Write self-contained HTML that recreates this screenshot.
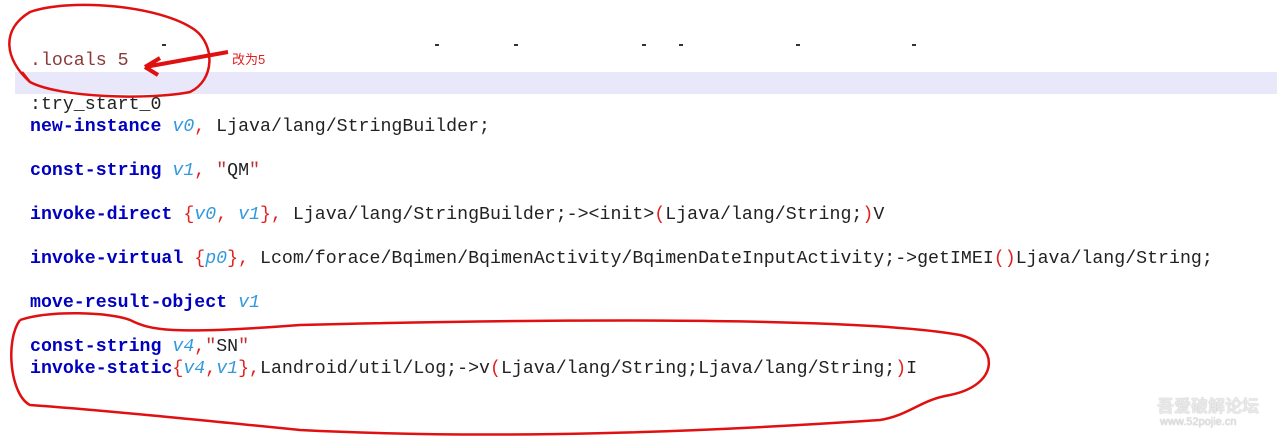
<!DOCTYPE html>
<html><head><meta charset="utf-8"><style>
body{margin:0;width:1277px;height:440px;background:#fff;position:relative;overflow:hidden;font-family:"Liberation Mono",monospace;font-size:18.25px}
.l{position:absolute;left:30px;white-space:pre;line-height:22px;color:#222}
.k{color:#0000c0;font-weight:bold}
.v{color:#3399dd;font-style:italic}
.r{color:#e02020}
.p{color:#8b3a3a}
.s{color:#c03030}
.d{position:absolute;top:44px;width:4px;height:2px;background:#333}
</style></head><body>
<div style="position:absolute;left:15px;top:72px;width:1262px;height:22px;background:#e8e8fa"></div>
<div class="d" style="left:162px"></div><div class="d" style="left:435px"></div><div class="d" style="left:514px"></div><div class="d" style="left:642px"></div><div class="d" style="left:679px"></div><div class="d" style="left:796px"></div><div class="d" style="left:912px"></div>
<div class="l p" style="top:50px">.locals 5</div>
<div class="l" style="top:94px">:try_start_0</div>
<div class="l" style="top:116px"><span class="k">new-instance</span> <span class="v">v0</span><span class="r">,</span> Ljava/lang/StringBuilder;</div>
<div class="l" style="top:160px"><span class="k">const-string</span> <span class="v">v1</span><span class="r">,</span> <span class="s">"</span>QM<span class="s">"</span></div>
<div class="l" style="top:204px"><span class="k">invoke-direct</span> <span class="r">{</span><span class="v">v0</span><span class="r">,</span> <span class="v">v1</span><span class="r">}</span><span class="r">,</span> Ljava/lang/StringBuilder;-&gt;&lt;init&gt;<span class="r">(</span>Ljava/lang/String;<span class="r">)</span>V</div>
<div class="l" style="top:248px"><span class="k">invoke-virtual</span> <span class="r">{</span><span class="v">p0</span><span class="r">}</span><span class="r">,</span> Lcom/forace/Bqimen/BqimenActivity/BqimenDateInputActivity;-&gt;getIMEI<span class="r">()</span>Ljava/lang/String;</div>
<div class="l" style="top:292px"><span class="k">move-result-object</span> <span class="v">v1</span></div>
<div class="l" style="top:336px"><span class="k">const-string</span> <span class="v">v4</span><span class="r">,</span><span class="s">"</span>SN<span class="s">"</span></div>
<div class="l" style="top:358px"><span class="k">invoke-static</span><span class="r">{</span><span class="v">v4</span><span class="r">,</span><span class="v">v1</span><span class="r">}</span><span class="r">,</span>Landroid/util/Log;-&gt;v<span class="r">(</span>Ljava/lang/String;Ljava/lang/String;<span class="r">)</span>I</div>
<div style="position:absolute;left:232px;top:49px;font:13px 'Liberation Sans','Noto Sans CJK SC',sans-serif;color:#e02020">改为5</div>
<svg width="1277" height="440" style="position:absolute;left:0;top:0" fill="none" stroke="#e01010" stroke-width="2.5">
<path d="M30 82 C5 60 0 30 30 12 C70 -2 160 5 195 30 C215 45 215 80 190 92 C150 100 60 98 30 82 L22 72"/>
<path d="M228 52 L145 67 M145 67 L160 58 M145 67 L158 75" stroke-width="4"/>
<path d="M20 320 C50 310 110 312 130 320 C150 330 170 335 300 325 C500 320 850 315 960 335 C1000 345 1000 385 950 395 C920 400 910 415 880 420 C700 432 500 440 300 430 C200 420 100 410 30 405 C10 395 5 340 20 320"/>
</svg>
<div style="position:absolute;left:1157px;top:392px;font:bold 17px 'Liberation Sans','Noto Sans CJK SC',sans-serif;color:#e8e8e8;text-shadow:0 0 1px #aaa">吾爱破解论坛</div>
<div style="position:absolute;left:1160px;top:416px;font:11px 'Liberation Sans',sans-serif;color:#e0e0e0;text-shadow:0 0 1px #aaa">www.52pojie.cn</div>
</body></html>
